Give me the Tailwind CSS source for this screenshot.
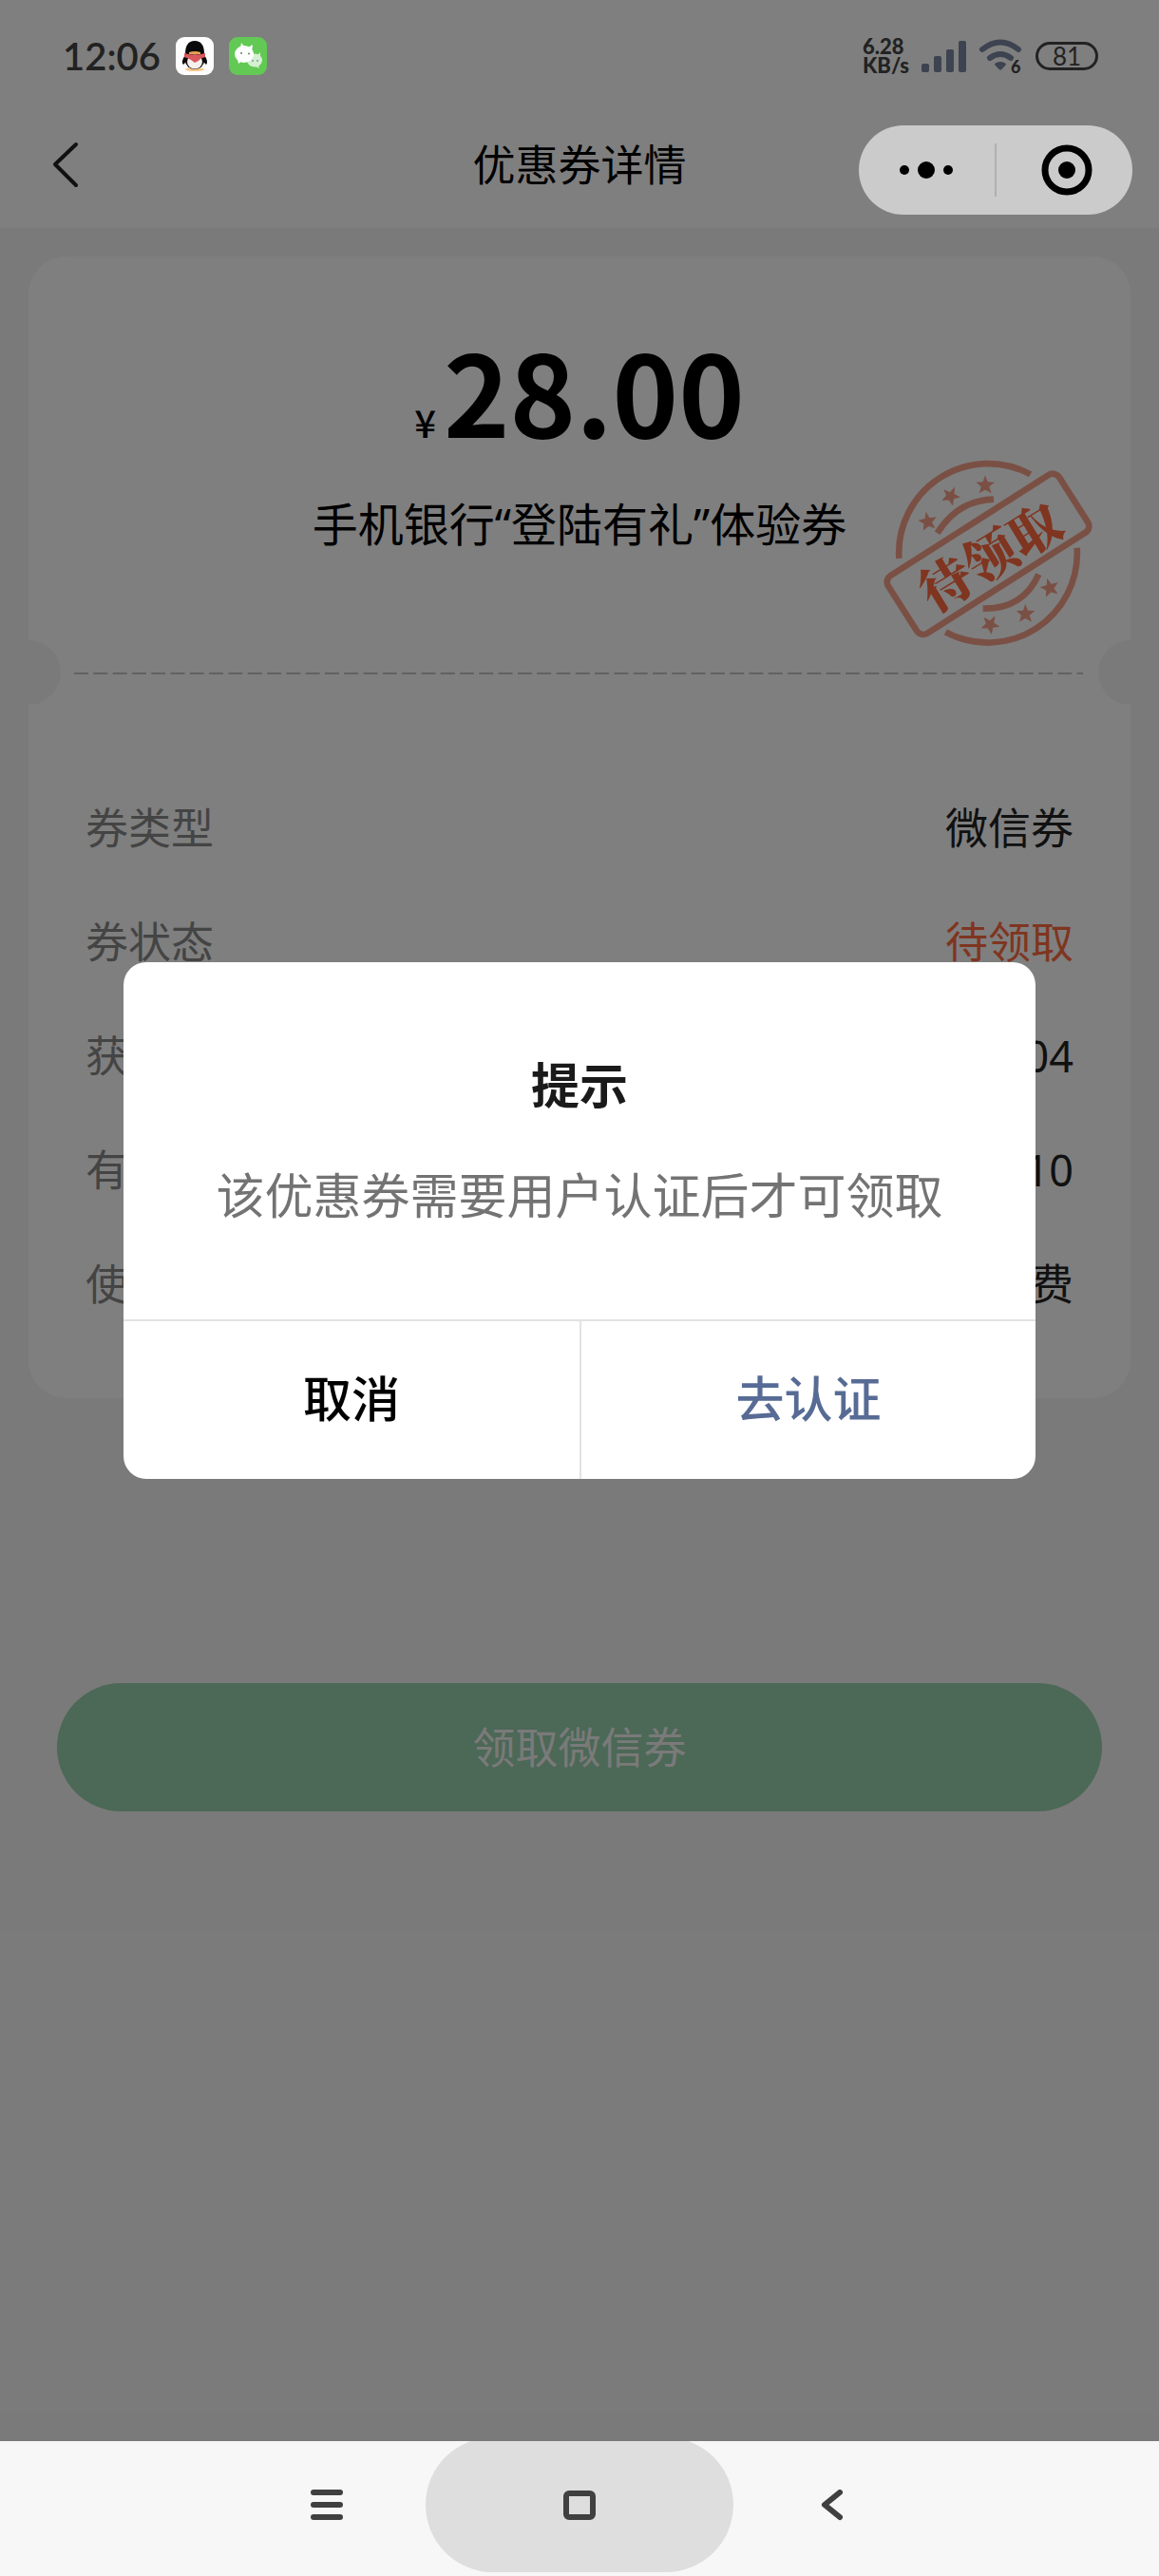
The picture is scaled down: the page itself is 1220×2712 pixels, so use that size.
<!DOCTYPE html>

<html lang="zh-CN">
<head>
  <title>优惠券详情</title>
  <meta charset="utf-8">
  <meta name="viewport" content="width=device-width, initial-scale=1">

  <script src="https://cdn.jsdelivr.net/npm/@tailwindcss/browser@4"></script>
</head>

<body class="min-h-screen flex flex-col bg-[#f5f5f5] font-['Noto_Sans','Noto_Sans_CJK_SC',sans-serif] text-[45px] leading-[60px]">
  <div id="app" class="relative flex-1 flex flex-col">
    <!-- status bar, stays above the mask -->
    <div id="status" class="absolute top-0 left-0 z-20 w-full h-[117px] pl-[66px] pr-16 flex justify-between items-center text-[#222]">
      <div class="flex items-center gap-4">
        <span class="font-['Lato',sans-serif] font-semibold text-[40px] leading-[48px]">12:06</span>
        <svg class="w-10 h-10" viewBox="0 0 40 40">
          <rect width="40" height="40" rx="9" fill="#fdfdfd" />
          <ellipse cx="20" cy="34" rx="10" ry="2" fill="#f6c98a" />
          <path d="M10 19C7 23 6 27 8 29L12 25ZM30 19C33 23 34 27 32 29L28 25Z" fill="#0a0a0a" />
          <ellipse cx="20" cy="25" rx="10" ry="9" fill="#0a0a0a" />
          <ellipse cx="20" cy="26" rx="8" ry="7.500" fill="#f5f0ee" />
          <path d="M10 18C10 9 13 4 20 4S30 9 30 18Z" fill="#0a0a0a" />
          <path d="M14 16Q20 14 26 16V18H14Z" fill="#e9a04f" />
          <path d="M9 17Q20 20 31 17L31 21Q26 22 24 25L20 27L16 24Q12 22 9 21Z" fill="#d8585b" />
        </svg>
        <svg class="w-10 h-10" viewBox="0 0 40 40">
          <rect width="40" height="40" rx="9" fill="#62c954" />
          <ellipse cx="27" cy="24.500" rx="8" ry="7" fill="#d5f0d1" />
          <path d="M21 20L23 16L26 19ZM30 19L33 16L33 22ZM31 30L32 33L28 31Z" fill="#d5f0d1" />
          <ellipse cx="16" cy="18" rx="10" ry="9" fill="#fff" />
          <path d="M12 12L13 6L17 11ZM20 11L25 8L24 16ZM9 23L10 28L14 25Z" fill="#fff" />
          <circle cx="13" cy="17" r="1" fill="#62855e" />
          <circle cx="21" cy="17.500" r="1" fill="#62855e" />
          <circle cx="25" cy="25" r="1" fill="#7d9dab" />
          <circle cx="30" cy="25" r="1" fill="#7d9dab" />
        </svg>
      </div>

      <div class="flex items-center">
        <div class="w-[62px] font-['Lato',sans-serif] font-black text-[22px] leading-5">
          <div>6.28</div>
          <div>KB/s</div>
        </div>
        <svg class="w-12 h-[34px]" viewBox="0 0 48 34" fill="#3d4350">
          <rect x="0" y="25" width="8" height="9" rx="2" />
          <rect x="13" y="17" width="8" height="17" rx="2" />
          <rect x="26" y="10" width="8" height="24" rx="2" />
          <rect x="39" y="1" width="8" height="33" rx="2" />
        </svg>
        <svg class="w-12 h-11 ml-3 mr-3" viewBox="0 0 48 44">
          <g fill="none" stroke="#3d4350" stroke-width="6" stroke-linecap="round">
            <path d="M4 15Q23 0 42 15" />
            <path d="M12 24Q23 16 34 24" />
          </g>
          <path d="M17 30Q23 26 29 30Q29 32 23 37Q17 32 17 30Z" fill="#3d4350" />
          <text x="34" y="40" font-size="18" font-weight="900" font-family="Lato, sans-serif" fill="#222">6</text>
        </svg>
        <div class="w-[66px] h-[30px] border-[3px] border-[#222] rounded-full flex justify-center items-center font-['Lato',sans-serif] text-[26px] leading-6">81</div>
      </div>
    </div>

    <header class="h-60 pt-36 bg-white flex justify-center">
      <button aria-label="返回" class="absolute left-10 top-[143px] w-[60px] h-[60px]">
        <svg class="w-[60px] h-[60px]" viewBox="0 0 60 60" fill="none" stroke="#222" stroke-width="4" stroke-linecap="round" stroke-linejoin="round">
          <path d="M40 9L18 30L40 52" />
        </svg>
      </button>
      <h1>优惠券详情</h1>
    </header>

    <!-- mini program capsule -->
    <div class="absolute right-7 top-[132px] z-20 w-72 h-[94px] rounded-full bg-[#cbcbcb] flex items-center">
      <button aria-label="更多" class="flex-1 flex justify-center">
        <svg class="w-[60px] h-[60px]" viewBox="0 0 60 60">
          <circle cx="6" cy="30" r="5" />
          <circle cx="29" cy="30" r="9" />
          <circle cx="52" cy="30" r="5" />
        </svg>
      </button>
      <span class="w-0.5 h-14 bg-[#b0b0b0]"></span>
      <button aria-label="关闭" class="flex-1 flex justify-center">
        <svg class="w-[60px] h-[60px]" viewBox="0 0 60 60">
          <circle cx="32" cy="30" r="23" fill="none" stroke="#000" stroke-width="7" />
          <circle cx="32" cy="30" r="9" />
        </svg>
      </button>
    </div>

    <main class="flex-1">
      <section class="relative mx-[30px] mt-[30px] bg-white rounded-[40px] overflow-hidden">
        <div class="h-[438px] pt-20 flex flex-col items-center">
          <p class="flex items-baseline gap-2 font-['Noto_Sans_CJK_SC',sans-serif]">
            <span class="text-[40px] font-medium">¥</span><span class="text-[118px] leading-[120px] font-bold">28.00</span>
          </p>
          <h2 class="mt-12 text-5xl leading-[60px]">手机银行“登陆有礼”体验券</h2>
        </div>

        <span class="absolute -left-[34px] top-[404px] w-[68px] h-[68px] rounded-full bg-[#f5f5f5]"></span>
        <span class="absolute -right-[34px] top-[404px] w-[68px] h-[68px] rounded-full bg-[#f5f5f5]"></span>
        <svg class="block ml-12 w-[calc(100%-98px)] h-0.5" aria-hidden="true">
          <line x1="0" y1="1" x2="100%" y2="1" stroke="#c4c4c4" stroke-width="2" stroke-dasharray="15 5.3" />
        </svg>

        <svg class="absolute right-[30px] top-[210px] w-[240px] h-[210px]" viewBox="60 60 720 630" role="img" aria-label="待领取">
          <g fill="none" stroke="#f5a08a" stroke-width="20">
            <path d="M139 384A282 282 0 0 1 554 118" />
            <path d="M701 350A282 282 0 0 1 286 616" />
            <path d="M260 304Q325 200 438 197" />
            <path d="M404 542Q530 545 580 434" />
            <rect x="-320" y="-108" width="640" height="216" rx="24" transform="translate(420 370) rotate(-32.500)" />
          </g>
          <g fill="#f5a08a">
            <path id="star" d="M411 121L419 142L441 143L424 157L431 178L411 167L392 178L398 157L382 143L404 142Z" />
            <use href="#star" transform="translate(-108 34) rotate(25 411 150)" />
            <use href="#star" transform="translate(-182 115) rotate(-10 411 150)" />
            <use href="#star" transform="translate(203 324) rotate(-15 411 150)" />
            <use href="#star" transform="translate(127 406)" />
            <use href="#star" transform="translate(17 440) rotate(30 411 150)" />
          </g>
          <text transform="translate(428 378) rotate(-31.500)" y="60" text-anchor="middle" font-size="164" font-weight="900" font-family="'Noto Serif CJK SC', 'Noto Sans CJK SC', serif" fill="#ff6b40">待领取</text>
        </svg>

        <dl class="px-[60px] pt-[102px] pb-[60px] text-[#222]">
          <div class="h-[120px] flex justify-between items-center"><dt class="text-[#888]">券类型</dt><dd>微信券</dd></div>
          <div class="h-[120px] flex justify-between items-center"><dt class="text-[#888]">券状态</dt><dd class="text-[#ff6b40]">待领取</dd></div>
          <div class="h-[120px] flex justify-between items-center"><dt class="text-[#888]">获</dt><dd>04</dd></div>
          <div class="h-[120px] flex justify-between items-center"><dt class="text-[#888]">有</dt><dd>10</dd></div>
          <div class="h-[120px] flex justify-between items-center"><dt class="text-[#888]">使</dt><dd>费</dd></div>
        </dl>
      </section>

      <div class="mt-[300px] px-[60px]">
        <button class="w-full h-[135px] rounded-full bg-[#98d0ac] text-[#f5f5f5]">领取微信券</button>
      </div>
    </main>

    <div id="mask" class="absolute inset-0 z-10 bg-black/50 flex justify-center items-center">
      <div role="dialog" aria-labelledby="dialog-title" class="w-[960px] max-w-[80%] bg-white rounded-3xl overflow-hidden text-[51px] leading-[72px] text-center">
        <div class="h-[376px] pt-[93px]">
          <h3 id="dialog-title" class="font-bold text-[#1a1a1a]">提示</h3>
          <p class="mt-11 text-[#737373]">该优惠券需要用户认证后才可领取</p>
        </div>
        <div class="h-[168px] grid grid-cols-2 border-t-2 border-[#e2e2e2] font-medium">
          <button class="pb-1 text-black">取消</button>
          <button class="pb-1 text-[#576b95] border-l-2 border-[#e2e2e2]">去认证</button>
        </div>
      </div>
    </div>
  </div>

  <!-- system navigation -->
  <nav class="relative z-30 h-[142px] bg-[#f7f7f7] flex justify-center overflow-hidden">
    <button aria-label="最近任务" class="w-52 flex justify-center items-center">
      <svg class="w-10 h-10" viewBox="0 0 40 40" stroke="#404040" stroke-width="6" stroke-linecap="round">
        <path d="M6 3H34M6 16H34M6 29H34" />
      </svg>
    </button>
    <button aria-label="主屏幕" class="w-[324px] h-[142px] -mt-1 rounded-full bg-[#dedede] flex justify-center items-center">
      <span class="w-[34px] h-[31px] border-[6px] border-[#404040] rounded-md"></span>
    </button>
    <button aria-label="返回" class="w-52 flex justify-center items-center">
      <svg class="w-10 h-10" viewBox="0 0 40 40" fill="none" stroke="#404040" stroke-width="6" stroke-linecap="round" stroke-linejoin="round">
        <path d="M28 3L12 16L28 29" />
      </svg>
    </button>
  </nav>
</body>
</html>
